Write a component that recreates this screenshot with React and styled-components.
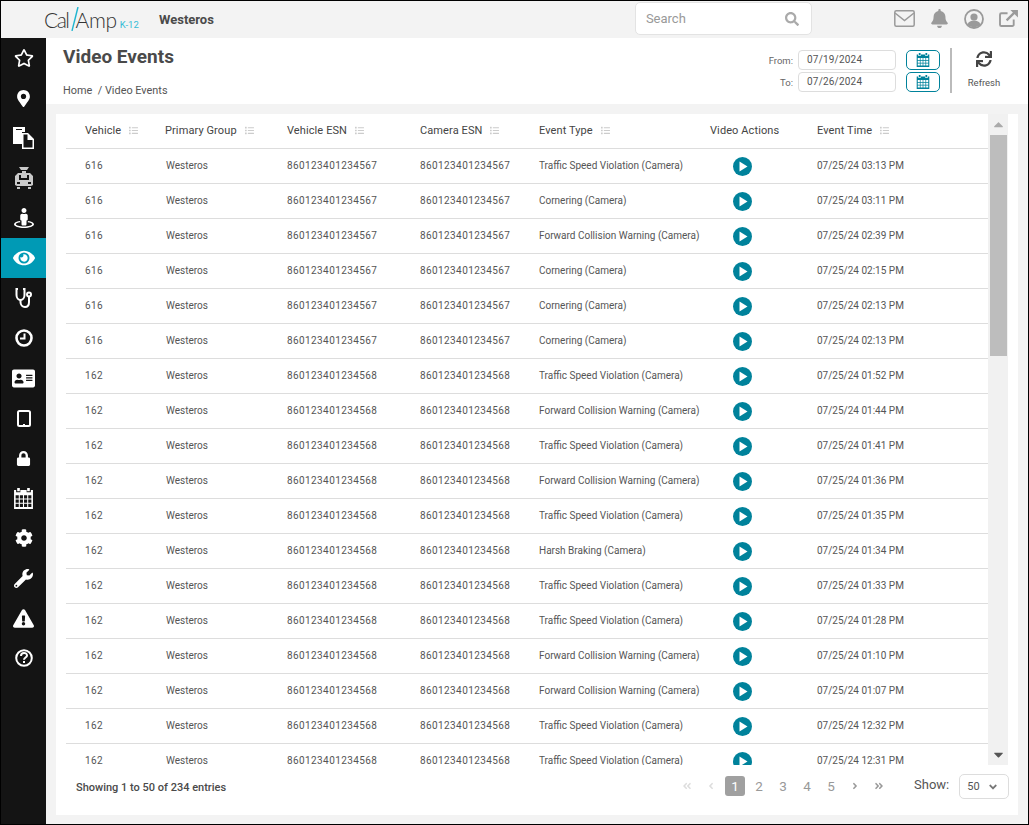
import styled, { createGlobalStyle } from "styled-components";
import {
  FaRegStar,
  FaMapMarkerAlt,
  FaStreetView,
  FaEye,
  FaAddressCard,
  FaLock,
  FaCog,
  FaWrench,
  FaExclamationTriangle,
  FaBell,
  FaSearch,
  FaSync,
  FaList,
  FaAngleDoubleLeft,
  FaAngleLeft,
  FaAngleRight,
  FaAngleDoubleRight,
  FaAngleDown,
  FaCaretUp,
  FaCaretDown,
} from "react-icons/fa";

const GlobalStyle = createGlobalStyle`
  * { box-sizing: border-box; }
  html, body { margin: 0; padding: 0; background: #f3f3f3; }
  body { font-family: Roboto, "Liberation Sans", sans-serif; color: #4a4a4a; }
`;

const DocsIcon = () => (
  <svg width="22" height="22" viewBox="0 0 22 22" fill="#fff">
    <path d="M0 0h12v5H9v12H0z" />
    <path d="M3 2h6v1H3z" fill="#141414" />
    <path d="M9 6h6l6 6v10H9zM10.500 7.500v13h9V13h-5V7.500z" fillRule="evenodd" />
    <path d="M15.500 7.500v4.500h4.500z" />
  </svg>
);

const BusIcon = () => (
  <svg width="20" height="22" viewBox="0 0 20 22" fill="#c9c9c9">
    <path d="M5 0h10l-2 3h-6zM8 4h4v2H8z" />
    <path d="M4 6h12l3 3v9l-2 1H3l-2-1V9zM5 8v5h10V8zM3 15v2h3v-2zM14 15v2h3v-2z" fillRule="evenodd" />
    <path d="M7 8h6v3H7zM3 20h3v2H3zM14 20h3v2h-3z" />
  </svg>
);

const StethIcon = () => (
  <svg width="18" height="20" viewBox="0 0 18 20" fill="none" stroke="#fff" strokeWidth="2">
    <path d="M3 1H1.500v6c0 3 2 5 4 5s4-2 4-5V1H8" />
    <path d="M5.500 12v2c0 3 2 5 4.500 5s4-2 4-5V9" />
    <circle cx="14" cy="6.500" r="2" />
  </svg>
);

const ClockIcon = () => (
  <svg width="18" height="18" viewBox="0 0 18 18" fill="none" stroke="#fff">
    <circle cx="9" cy="9" r="7.500" strokeWidth="2.600" />
    <path d="M9.500 4.500v5h-4.500" strokeWidth="2" />
  </svg>
);

const TabletIcon = () => (
  <svg width="14" height="17" viewBox="0 0 14 17" fill="none" stroke="#fff" strokeWidth="2">
    <rect x="1" y="1" width="12" height="15" rx="1.500" />
    <path d="M6 15h2" />
  </svg>
);

const HelpIcon = () => (
  <svg width="18" height="18" viewBox="0 0 18 18" fill="none" stroke="#fff">
    <circle cx="9" cy="9" r="7.800" strokeWidth="2" />
    <path d="M6 7c0-4 6-4 6-.500 0 2-3 2-3 4.200" strokeWidth="2" />
    <path d="M9 12v2" strokeWidth="2" />
  </svg>
);

const CalendarGrid = ({ color, size }) => (
  <svg width={size} height={size} viewBox="0 0 20 20" fill={color}>
    <path d="M4 0h2.500v3H4zM13.500 0H16v3h-2.500z" />
    <path
      d="M1 2h2v2h4V2h6v2h4V2h2v18H1zM2.500 7v3h3V7zM6.500 7v3h3V7zM10.500 7v3h3V7zM14.500 7v3h3V7zM2.500 11v3h3v-3zM6.500 11v3h3v-3zM10.500 11v3h3v-3zM14.500 11v3h3v-3zM2.500 15v3h3v-3zM6.500 15v3h3v-3zM10.500 15v3h3v-3zM14.500 15v3h3v-3z"
      fillRule="evenodd"
    />
  </svg>
);

const PlayIcon = () => (
  <svg width="19" height="19" viewBox="0 0 19 19">
    <circle cx="9.500" cy="9.500" r="9.500" fill="#00829b" />
    <path d="M6.500 4.500v10l8-5z" fill="#fff" />
  </svg>
);

const MailIcon = () => (
  <svg width="21" height="17" viewBox="0 0 21 17" fill="none" stroke="#9a9a9a" strokeWidth="1.500">
    <rect x="0.800" y="0.800" width="19.400" height="15.400" rx="1.500" />
    <path d="M1 3l9.500 7.500L20 3" />
  </svg>
);

const UserIcon = () => (
  <svg width="20" height="20" viewBox="0 0 20 20">
    <circle cx="10" cy="10" r="9" fill="none" stroke="#9a9a9a" strokeWidth="1.800" />
    <circle cx="10" cy="8" r="3.600" fill="#9a9a9a" />
    <path d="M3.500 15.500c1-3 3.500-4 6.500-4s5.500 1 6.500 4c-3 3.500-10 3.500-13 0z" fill="#9a9a9a" />
  </svg>
);

const LinkOutIcon = () => (
  <svg width="19" height="17" viewBox="0 0 20 18" fill="none" stroke="#9a9a9a">
    <path d="M15.500 10v5.500a1.500 1.500 0 0 1-1.500 1.500H2.500A1.500 1.500 0 0 1 1 15.500V5a1.500 1.500 0 0 1 1.500-1.500H9" strokeWidth="2" />
    <path d="M8 11l9-9" strokeWidth="2.400" />
    <path d="M12 0h8v8z" fill="#9a9a9a" stroke="none" />
  </svg>
);

const navItems = [
  { key: "star", icon: <FaRegStar size={20} /> },
  { key: "pin", icon: <FaMapMarkerAlt size={17} /> },
  { key: "docs", icon: <DocsIcon /> },
  { key: "bus", icon: <BusIcon /> },
  { key: "person", icon: <FaStreetView size={20} /> },
  { key: "eye", icon: <FaEye size={22} />, active: true },
  { key: "steth", icon: <StethIcon /> },
  { key: "clock", icon: <ClockIcon /> },
  { key: "id", icon: <FaAddressCard size={23} /> },
  { key: "tablet", icon: <TabletIcon /> },
  { key: "lock", icon: <FaLock size={15} /> },
  { key: "cal", icon: <CalendarGrid color="#fff" size={21} /> },
  { key: "gear", icon: <FaCog size={18} /> },
  { key: "wrench", icon: <FaWrench size={19} /> },
  { key: "warn", icon: <FaExclamationTriangle size={21} /> },
  { key: "help", icon: <HelpIcon /> },
];

const columns = [
  { label: "Vehicle", width: 80, sort: true },
  { label: "Primary Group", width: 122, sort: true },
  { label: "Vehicle ESN", width: 133, sort: true },
  { label: "Camera ESN", width: 119, sort: true },
  { label: "Event Type", width: 171, sort: true },
  { label: "Video Actions", width: 107 },
  { label: "Event Time", width: 171, sort: true },
];

const TS = "Traffic Speed Violation (Camera)";
const CO = "Cornering (Camera)";
const FC = "Forward Collision Warning (Camera)";
const HB = "Harsh Braking (Camera)";

const rows = [
  ["616", TS, "03:13 PM"],
  ["616", CO, "03:11 PM"],
  ["616", FC, "02:39 PM"],
  ["616", CO, "02:15 PM"],
  ["616", CO, "02:13 PM"],
  ["616", CO, "02:13 PM"],
  ["162", TS, "01:52 PM"],
  ["162", FC, "01:44 PM"],
  ["162", TS, "01:41 PM"],
  ["162", FC, "01:36 PM"],
  ["162", TS, "01:35 PM"],
  ["162", HB, "01:34 PM"],
  ["162", TS, "01:33 PM"],
  ["162", TS, "01:28 PM"],
  ["162", FC, "01:10 PM"],
  ["162", FC, "01:07 PM"],
  ["162", TS, "12:32 PM"],
  ["162", TS, "12:31 PM"],
];

export default function App() {
  return (
    <Frame>
      <GlobalStyle />
      <TopBar>
        <Logo>
          <LogoWord $tight>Cal</LogoWord>
          <LogoSlash width="8" height="24" viewBox="0 0 8 24">
            <path d="M7 0L1 24" stroke="#1fb5d0" strokeWidth="1.400" />
          </LogoSlash>
          <LogoWord>Amp</LogoWord>
          <LogoTag>K-12</LogoTag>
        </Logo>
        <OrgName>Westeros</OrgName>
        <SearchBox>
          <span>Search</span>
          <FaSearch size={14} color="#aaa" />
        </SearchBox>
        <TopIcons>
          <MailIcon />
          <FaBell size={19} />
          <UserIcon />
          <LinkOutIcon />
        </TopIcons>
      </TopBar>
      <Body>
        <Sidebar>
          {navItems.map((item) => (
            <NavItem key={item.key} $active={item.active}>
              {item.icon}
            </NavItem>
          ))}
        </Sidebar>
        <Main>
          <PageHeader>
            <div>
              <Title>Video Events</Title>
              <Breadcrumb>Home&nbsp;&nbsp;/ Video Events</Breadcrumb>
            </div>
            <HeaderRight>
              <DateGrid>
                <DateLabel>From:</DateLabel>
                <DateInput>07/19/2024</DateInput>
                <CalButton>
                  <CalendarGrid color="#00829b" size={14} />
                </CalButton>
                <DateLabel>To:</DateLabel>
                <DateInput>07/26/2024</DateInput>
                <CalButton>
                  <CalendarGrid color="#00829b" size={14} />
                </CalButton>
              </DateGrid>
              <RefreshBox>
                <FaSync size={16} color="#444" />
                <span>Refresh</span>
              </RefreshBox>
            </HeaderRight>
          </PageHeader>
          <Card>
            <TableArea>
              <TableView>
                <HeadRow>
                  {columns.map((c) => (
                    <HeadCell key={c.label} $w={c.width}>
                      {c.label}
                      {c.sort && <FaList size={9} color="#ccc" />}
                    </HeadCell>
                  ))}
                </HeadRow>
                {rows.map((r, i) => {
                  const esn = r[0] === "616" ? "860123401234567" : "860123401234568";
                  return (
                    <Row key={i}>
                      <Cell $w={80} $spaced>{r[0]}</Cell>
                      <GroupCell $w={122}>Westeros</GroupCell>
                      <Cell $w={133} $spaced>{esn}</Cell>
                      <Cell $w={119} $spaced>{esn}</Cell>
                      <Cell $w={171}>{r[1]}</Cell>
                      <PlayCell $w={107}>
                        <PlayIcon />
                      </PlayCell>
                      <Cell $w={171}>07/25/24 {r[2]}</Cell>
                    </Row>
                  );
                })}
              </TableView>
              <ScrollTrack>
                <ScrollArrow $color="#aaa">
                  <FaCaretUp size={15} />
                </ScrollArrow>
                <ScrollLane>
                  <ScrollThumb />
                </ScrollLane>
                <ScrollArrow $color="#555">
                  <FaCaretDown size={15} />
                </ScrollArrow>
              </ScrollTrack>
            </TableArea>
            <Footer>
              <Showing>Showing 1 to 50 of 234 entries</Showing>
              <Pager>
                <PageLink $dim><FaAngleDoubleLeft size={10} /></PageLink>
                <PageLink $dim><FaAngleLeft size={10} /></PageLink>
                <PageLink $current>1</PageLink>
                <PageLink>2</PageLink>
                <PageLink>3</PageLink>
                <PageLink>4</PageLink>
                <PageLink>5</PageLink>
                <PageLink><FaAngleRight size={10} /></PageLink>
                <PageLink><FaAngleDoubleRight size={10} /></PageLink>
              </Pager>
              <ShowLabel>Show:</ShowLabel>
              <ShowSelect>
                50
                <FaAngleDown size={12} color="#777" />
              </ShowSelect>
            </Footer>
          </Card>
        </Main>
      </Body>
    </Frame>
  );
}

const Frame = styled.div`
  width: 1029px;
  height: 825px;
  border: 1px solid #000;
  display: flex;
  flex-direction: column;
  overflow: hidden;
  background: #f3f3f3;
`;

const TopBar = styled.header`
  height: 37px;
  flex: none;
  display: flex;
  align-items: center;
  padding: 0 10px 0 43px;
  background: #f3f3f3;
`;

const Logo = styled.div`
  width: 115px;
  height: 24px;
  flex: none;
  display: flex;
  align-items: center;
  margin-top: -1px;
`;

const LogoWord = styled.span`
  font-family: Lato, sans-serif;
  font-weight: 300;
  font-size: 21px;
  color: #333;
  letter-spacing: ${(p) => (p.$tight ? "-1.500px" : "-0.3px")};
`;

const LogoSlash = styled.svg`
  flex: none;
  margin: 0 -3px 0 2px;
`;

const LogoTag = styled.span`
  font-size: 9.500px;
  color: #35bcd6;
  margin: 10px 0 0 3px;
`;

const OrgName = styled.div`
  font-size: 13px;
  font-weight: 700;
  color: #4a4a4a;
`;

const SearchBox = styled.div`
  width: 177px;
  height: 33px;
  margin: 0 0 2px 421px;
  padding: 0 12px 0 10px;
  display: flex;
  align-items: center;
  justify-content: space-between;
  background: #fff;
  border: 1px solid #e3e3e3;
  border-radius: 5px;
  font-size: 13px;
  color: #999;
`;

const TopIcons = styled.div`
  margin: 0 0 2px auto;
  display: flex;
  align-items: center;
  gap: 15px;
  color: #9a9a9a;
`;

const Body = styled.div`
  flex: 1;
  min-height: 0;
  display: flex;
`;

const Sidebar = styled.nav`
  width: 45px;
  flex: none;
  background: #141414;
`;

const NavItem = styled.div`
  height: 40px;
  display: flex;
  align-items: center;
  justify-content: center;
  color: #fff;
  background: ${(p) => (p.$active ? "#009ab5" : "transparent")};
`;

const Main = styled.main`
  flex: 1;
  min-width: 0;
  display: flex;
  flex-direction: column;
`;

const PageHeader = styled.div`
  height: 66px;
  flex: none;
  display: flex;
  justify-content: space-between;
  padding: 8px 12px 0 17px;
  background: #fff;
`;

const Title = styled.h1`
  margin: 0;
  font-size: 19px;
  line-height: 22px;
  font-weight: 700;
  color: #4a4a4a;
`;

const Breadcrumb = styled.div`
  margin-top: 16px;
  font-size: 10.900px;
  line-height: 14px;
  color: #555;
`;

const HeaderRight = styled.div`
  display: flex;
  align-items: flex-start;
`;

const DateGrid = styled.div`
  display: grid;
  grid-template-columns: auto 98px 34px;
  column-gap: 10px;
  row-gap: 2px;
  align-items: center;
  margin-top: 4px;
`;

const DateLabel = styled.div`
  font-size: 9.500px;
  color: #666;
  text-align: right;
  margin-right: -5px;
`;

const DateInput = styled.div`
  height: 20px;
  padding-left: 8px;
  line-height: 18px;
  font-size: 10px;
  letter-spacing: 0.2px;
  color: #555;
  border: 1px solid #ddd;
  border-radius: 4px;
`;

const CalButton = styled.div`
  height: 20px;
  display: flex;
  align-items: center;
  justify-content: center;
  border: 1px solid #00829b;
  border-radius: 5px;
`;

const RefreshBox = styled.div`
  width: 66px;
  height: 45px;
  margin: 2px 0 0 10px;
  padding-top: 3px;
  display: flex;
  flex-direction: column;
  align-items: center;
  gap: 10px;
  border-left: 2px solid #bbb;
  font-size: 9.500px;
  color: #555;
`;

const Card = styled.section`
  flex: 1;
  min-height: 0;
  margin: 10px 10px 9px 10px;
  padding-left: 10px;
  background: #fff;
  display: flex;
  flex-direction: column;
`;

const TableArea = styled.div`
  height: 651px;
  flex: none;
  display: flex;
`;

const TableView = styled.div`
  width: 922px;
  overflow: hidden;
`;

const HeadRow = styled.div`
  height: 35px;
  display: flex;
  align-items: center;
  padding: 0 0 2px 19px;
  border-bottom: 1px solid #ddd;
`;

const HeadCell = styled.div`
  width: ${(p) => p.$w}px;
  flex: none;
  display: flex;
  align-items: center;
  gap: 8px;
  font-size: 11px;
  letter-spacing: 0.1px;
  color: #444;
`;

const Row = styled.div`
  height: 35px;
  display: flex;
  align-items: center;
  padding-left: 19px;
  border-bottom: 1px solid #ddd;
`;

const Cell = styled.div`
  width: ${(p) => p.$w}px;
  flex: none;
  margin-bottom: 1px;
  font-size: 10px;
  letter-spacing: ${(p) => (p.$spaced ? "0.4px" : "0")};
  color: #555;
  white-space: nowrap;
`;

const GroupCell = styled(Cell)`
  padding-left: 1px;
`;

const PlayCell = styled(Cell)`
  display: flex;
  margin-bottom: 0;
  padding-left: 23px;
`;

const ScrollTrack = styled.div`
  width: 20px;
  flex: none;
  display: flex;
  flex-direction: column;
  background: #f1f1f1;
`;

const ScrollArrow = styled.div`
  height: 21px;
  flex: none;
  display: flex;
  align-items: center;
  justify-content: center;
  color: ${(p) => p.$color};
`;

const ScrollLane = styled.div`
  flex: 1;
  padding: 0 1px 0 2px;
`;

const ScrollThumb = styled.div`
  height: 221px;
  background: #bdbdbd;
`;

const Footer = styled.div`
  flex: 1;
  display: flex;
  align-items: flex-start;
  padding: 9px 9px 0 10px;
`;

const Showing = styled.div`
  width: 599px;
  flex: none;
  margin-top: 7px;
  font-size: 11px;
  font-weight: 500;
  color: #4a4a4a;
`;

const Pager = styled.div`
  width: 239px;
  flex: none;
  display: flex;
  align-items: center;
  margin-top: 2px;
`;

const PageLink = styled.div`
  width: 20px;
  height: 20px;
  margin: 0 2px;
  display: flex;
  align-items: center;
  justify-content: center;
  font-size: 13.500px;
  color: ${(p) => (p.$current ? "#fff" : p.$dim ? "#ddd" : "#999")};
  background: ${(p) => (p.$current ? "#a0a0a0" : "transparent")};
  border-radius: 3px;
`;

const ShowLabel = styled.div`
  margin: 3px 10px 0 auto;
  font-size: 13px;
  color: #555;
`;

const ShowSelect = styled.div`
  width: 50px;
  height: 25px;
  padding: 0 9px 0 7px;
  display: flex;
  align-items: center;
  justify-content: space-between;
  border: 1px solid #ddd;
  border-radius: 5px;
  font-size: 11px;
  color: #555;
`;
